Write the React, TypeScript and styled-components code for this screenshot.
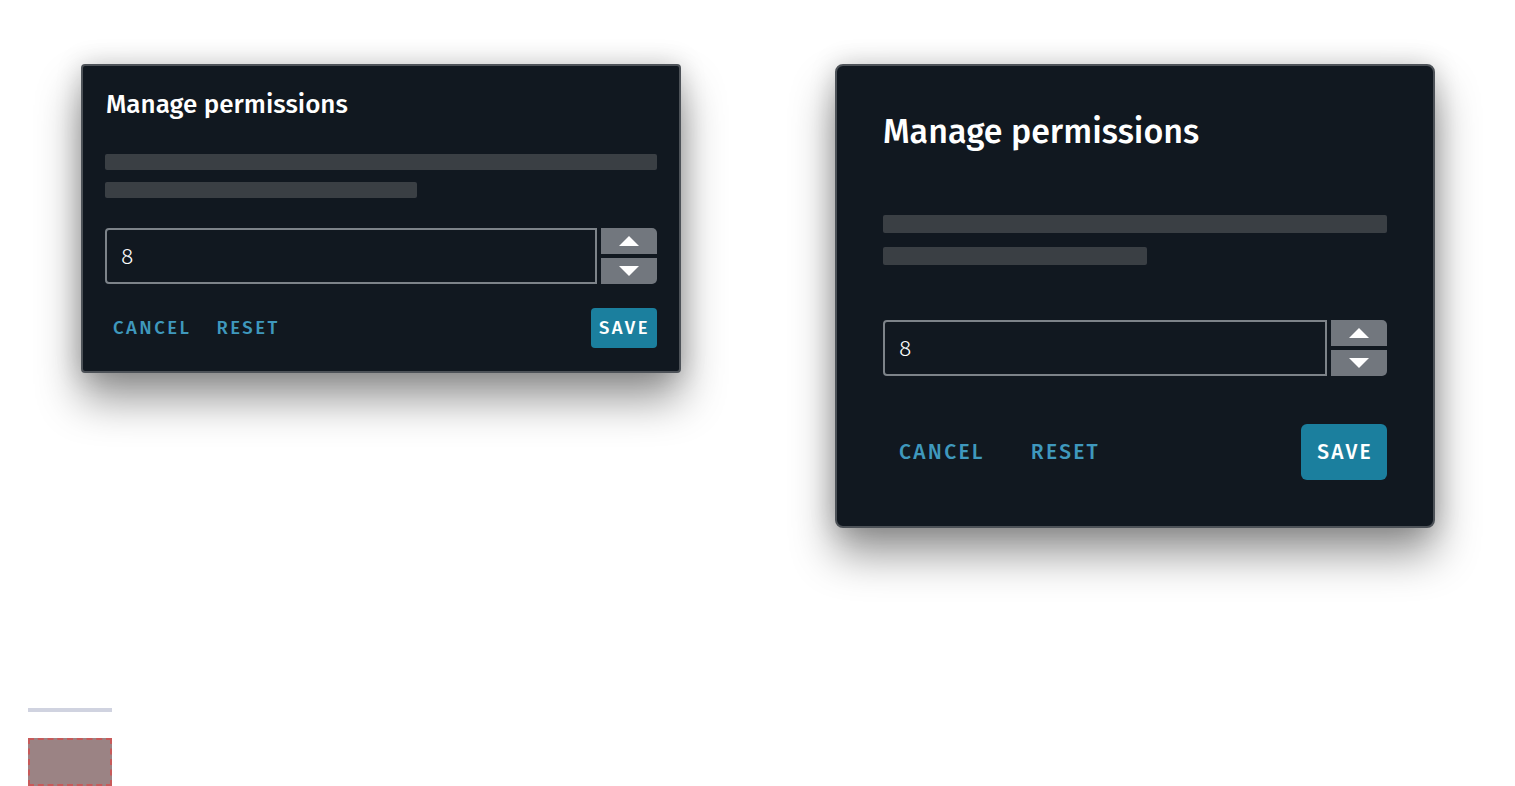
import React from "react";
import styled, { createGlobalStyle, css } from "styled-components";

type Size = "compact" | "large";

const GlobalStyle = createGlobalStyle`
  html, body {
    margin: 0;
    padding: 0;
    background: #ffffff;
    overflow: hidden;
    font-family: "Fira Sans", "Noto Sans", "Open Sans", sans-serif;
  }
`;

const Page = styled.div`
  width: 1515px;
  height: 786px;
  display: flex;
  flex-direction: column;
`;

const DialogRow = styled.div`
  flex-shrink: 0;
  display: flex;
  align-items: flex-start;
  gap: 154px;
  padding: 64px 0 0 81px;
  height: 644px;
  box-sizing: border-box;
`;

const Dialog = styled.section<{ $size: Size }>`
  box-sizing: border-box;
  width: 600px;
  background: #111820;
  border: 2px solid #4d5258;
  box-shadow: 0 26px 44px rgba(0, 0, 0, 0.42), 0 0 26px rgba(0, 0, 0, 0.18);
  display: flex;
  flex-direction: column;
  ${(p) =>
    p.$size === "compact"
      ? css`
          border-radius: 4px;
          padding: 23px 22px;
        `
      : css`
          border-radius: 8px;
          padding: 46px;
        `}
`;

const Title = styled.h2<{ $size: Size }>`
  margin: 0;
  color: #ffffff;
  font-family: "Fira Sans", "Noto Sans", sans-serif;
  font-weight: 500;
  ${(p) =>
    p.$size === "compact"
      ? css`
          font-size: 26px;
          line-height: 32px;
          padding-left: 1px;
        `
      : css`
          font-size: 34px;
          line-height: 40px;
        `}
`;

const Skeletons = styled.div<{ $size: Size }>`
  display: flex;
  flex-direction: column;
  gap: ${(p) => (p.$size === "compact" ? "12px" : "14px")};
  margin-top: ${(p) => (p.$size === "compact" ? "33px" : "63px")};
`;

const SkeletonLine = styled.div<{ $size: Size; $w: number }>`
  width: ${(p) => p.$w}px;
  height: ${(p) => (p.$size === "compact" ? "16px" : "18px")};
  border-radius: 2px;
  background: #3a3f44;
`;

const Field = styled.div<{ $size: Size }>`
  display: flex;
  gap: 4px;
  height: 56px;
  margin-top: ${(p) => (p.$size === "compact" ? "30px" : "55px")};
`;

const NumberInput = styled.div`
  flex: 1;
  box-sizing: border-box;
  border: 2px solid #7d8389;
  border-radius: 4px 0 0 4px;
  display: flex;
  align-items: center;
  padding-left: 14px;
  color: #ffffff;
  font-family: "Fira Sans", "Open Sans", sans-serif;
  font-weight: 300;
  font-size: 23px;
`;

const Stepper = styled.div`
  width: 56px;
  display: flex;
  flex-direction: column;
  gap: 4px;
`;

const StepButton = styled.button<{ $dir: "up" | "down" }>`
  flex: 1;
  border: none;
  padding: 0;
  background: #72777e;
  display: flex;
  align-items: center;
  justify-content: center;
  border-radius: ${(p) => (p.$dir === "up" ? "0 5px 0 0" : "0 0 5px 0")};
  cursor: pointer;
`;

const Actions = styled.div<{ $size: Size }>`
  display: flex;
  align-items: center;
  gap: ${(p) => (p.$size === "compact" ? "10px" : "16px")};
  margin-top: ${(p) => (p.$size === "compact" ? "24px" : "48px")};
`;

const ActionButton = styled.button<{ $size: Size; $primary?: boolean }>`
  border: none;
  font-family: "Fira Sans", "Noto Sans", sans-serif;
  font-weight: 500;
  text-transform: uppercase;
  cursor: pointer;
  border-radius: 4px;
  background: ${(p) => (p.$primary ? "#1b7f9e" : "transparent")};
  color: ${(p) => (p.$primary ? "#ffffff" : "#3f98bd")};
  margin-left: ${(p) => (p.$primary ? "auto" : "0")};
  ${(p) =>
    p.$size === "compact"
      ? css`
          height: 40px;
          padding: 0 7px 0 8px;
          font-size: 18.5px;
          letter-spacing: 2.5px;
        `
      : css`
          height: 56px;
          padding: 0 14px 0 16px;
          font-size: 21px;
          letter-spacing: 2.3px;
          border-radius: 6px;
        `}
`;

const Legend = styled.div`
  display: flex;
  flex-direction: column;
  gap: 26px;
  padding: 64px 0 0 28px;
`;

const Rule = styled.div`
  width: 84px;
  height: 4px;
  background: #d0d3e0;
`;

const DropZone = styled.div`
  box-sizing: border-box;
  width: 84px;
  height: 48px;
  background: #9b8384;
  border: 2px dashed #c85a5a;
`;

function Arrow({ dir }: { dir: "up" | "down" }) {
  return (
    <svg width="20" height="10" viewBox="0 0 20 10">
      {dir === "up" ? (
        <path d="M0 10 L10 0 L20 10 Z" fill="#ffffff" />
      ) : (
        <path d="M0 0 L20 0 L10 10 Z" fill="#ffffff" />
      )}
    </svg>
  );
}

function PermissionsDialog({ size }: { size: Size }) {
  const lines = size === "compact" ? [552, 312] : [504, 264];
  return (
    <Dialog $size={size}>
      <Title $size={size}>Manage permissions</Title>
      <Skeletons $size={size}>
        {lines.map((w) => (
          <SkeletonLine key={w} $size={size} $w={w} />
        ))}
      </Skeletons>
      <Field $size={size}>
        <NumberInput>8</NumberInput>
        <Stepper>
          <StepButton $dir="up" aria-label="Increase">
            <Arrow dir="up" />
          </StepButton>
          <StepButton $dir="down" aria-label="Decrease">
            <Arrow dir="down" />
          </StepButton>
        </Stepper>
      </Field>
      <Actions $size={size}>
        <ActionButton $size={size}>Cancel</ActionButton>
        <ActionButton $size={size}>Reset</ActionButton>
        <ActionButton $size={size} $primary>
          Save
        </ActionButton>
      </Actions>
    </Dialog>
  );
}

export default function App() {
  return (
    <>
      <GlobalStyle />
      <Page>
        <DialogRow>
          <PermissionsDialog size="compact" />
          <PermissionsDialog size="large" />
        </DialogRow>
        <Legend>
          <Rule />
          <DropZone />
        </Legend>
      </Page>
    </>
  );
}
